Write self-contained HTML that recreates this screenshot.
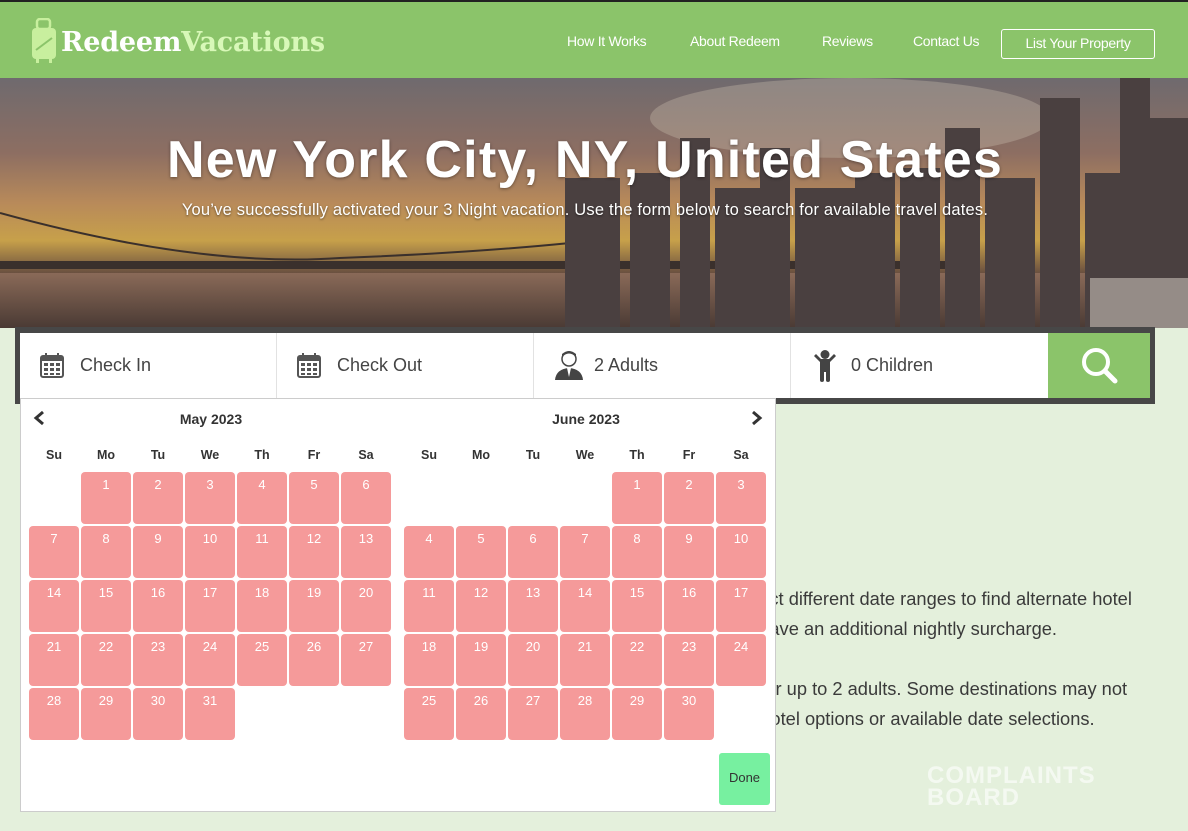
<!DOCTYPE html>
<html><head><meta charset="utf-8"><style>
*{box-sizing:border-box;margin:0;padding:0}
body{width:1188px;height:831px;overflow:hidden;background:#e4f0dc;font-family:"Liberation Sans",sans-serif;position:relative;color:#333}
.top{position:absolute;left:0;top:0;width:1188px;height:2px;background:#222}
header{position:absolute;left:0;top:2px;width:1188px;height:76px;background:#8bc46a}
.logo{position:absolute;left:61px;top:25px;font-family:"DejaVu Serif","Liberation Serif",serif;font-weight:bold;font-size:27px;color:#fff;letter-spacing:-0.2px}
.logo span{color:#d8f8b8}
nav a{position:absolute;top:31px;color:#fff;font-size:14px;text-decoration:none;letter-spacing:-0.3px}
.lp{position:absolute;left:1001px;top:27px;width:154px;height:30px;border:1.5px solid #fff;border-radius:3px;color:#fff;font-size:14px;text-align:center;line-height:27px;letter-spacing:-0.3px}
.hero{position:absolute;left:0;top:78px;width:1188px;height:250px;overflow:hidden}
h1{position:absolute;left:0;width:1170px;text-align:center;font-size:52px;color:#fff;font-weight:bold;letter-spacing:1.2px;text-shadow:0 1px 3px rgba(0,0,0,.4)}
.sub{position:absolute;left:0;width:1170px;text-align:center;font-size:16.5px;color:#fff;text-shadow:0 1px 2px rgba(0,0,0,.5);letter-spacing:0.2px}
.bar{position:absolute;left:15px;top:327px;width:1140px;height:77px;background:#474747}
.in{position:absolute;left:20px;top:333px;width:1130px;height:65px;background:#fff}
.f{position:absolute;top:0;height:65px;border-right:1px solid #e2e2e2;font-size:18px;color:#444;line-height:65px}
.f svg{position:absolute;top:19px}
.sb{position:absolute;left:1028px;top:0;width:102px;height:65px;background:#8bc46a}
.cal{position:absolute;left:20px;top:398px;width:756px;height:414px;background:#fff;border:1px solid #ccc;z-index:2}
.mt{position:absolute;top:12px;font-size:14px;color:#333;font-weight:bold;width:364px;text-align:center}
.wd{position:absolute;top:49px;font-size:12.5px;font-weight:bold;color:#333;width:50px;text-align:center}
.d{position:absolute;width:50px;height:52px;background:#f59a9a;border-radius:4px;color:#fff;font-size:13px;text-align:center;padding-top:5px}
.done{position:absolute;left:698px;top:354px;width:51px;height:52px;background:#77f0a0;border-radius:3px;font-size:13px;color:#333;text-align:center;line-height:50px}
.txt{position:absolute;left:745px;font-size:18.3px;color:#3a3a3a;z-index:1;white-space:nowrap}
.cb{position:absolute;left:927px;top:765px;color:rgba(255,255,255,.6);font-size:24px;font-weight:bold;line-height:22px;letter-spacing:1px}
</style></head><body>
<div class="top"></div>
<header>
<svg style="position:absolute;left:30px;top:16px" width="28" height="46" viewBox="0 0 28 46"><rect x="7" y="1" width="13" height="10" rx="3" fill="none" stroke="#c8ef9e" stroke-width="2.5"/><rect x="2" y="10" width="24" height="31" rx="4" fill="#c8ef9e"/><rect x="6" y="40" width="3" height="5" fill="#c8ef9e"/><rect x="19" y="40" width="3" height="5" fill="#c8ef9e"/><path d="M6 32 L22 20" stroke="#8bc46a" stroke-width="2"/></svg>
<div class="logo">Redeem<span>Vacations</span></div>
<nav><a style="left:567px">How It Works</a><a style="left:690px">About Redeem</a><a style="left:822px">Reviews</a><a style="left:913px">Contact Us</a></nav>
<div class="lp">List Your Property</div>
</header>
<div class="hero">
<svg width="1188" height="250" viewBox="0 0 1188 250" preserveAspectRatio="none">
<defs><linearGradient id="sky" x1="0" y1="0" x2="0" y2="1">
<stop offset="0" stop-color="#6f6a6e"/><stop offset=".3" stop-color="#8d6e62"/><stop offset=".5" stop-color="#b88a5a"/><stop offset=".65" stop-color="#c7a04a"/><stop offset=".78" stop-color="#6a5040"/><stop offset="1" stop-color="#3e3430"/></linearGradient>
<linearGradient id="w" x1="0" y1="0" x2="0" y2="1"><stop offset="0" stop-color="#8a6a58"/><stop offset="1" stop-color="#4a3a34"/></linearGradient></defs>
<rect width="1188" height="250" fill="url(#sky)"/>
<ellipse cx="850" cy="40" rx="200" ry="40" fill="#ccbfb0" opacity=".35"/>
<rect x="0" y="195" width="1188" height="55" fill="url(#w)"/>
<rect x="0" y="183" width="950" height="8" fill="#3a302c"/>
<path d="M0 135 Q200 190 340 180 Q470 175 570 165" stroke="#3a302c" stroke-width="2" fill="none"/>
<g fill="#4a4040">
<rect x="565" y="100" width="55" height="150"/><rect x="630" y="95" width="40" height="155"/><rect x="680" y="60" width="30" height="190"/><rect x="715" y="110" width="50" height="140"/><rect x="760" y="70" width="30" height="180"/><rect x="795" y="110" width="60" height="140"/><rect x="855" y="95" width="40" height="155"/><rect x="900" y="90" width="40" height="160"/><rect x="945" y="50" width="35" height="200"/><rect x="985" y="100" width="50" height="150"/><rect x="1040" y="20" width="40" height="230"/><rect x="1085" y="95" width="35" height="155"/><rect x="1120" y="0" width="30" height="250"/><rect x="1150" y="40" width="38" height="210"/>
</g>
<rect x="1090" y="200" width="98" height="50" fill="#c8c0b8" opacity=".6"/>
</svg>
<h1 style="top:52px">New York City, NY, United States</h1>
<div class="sub" style="top:123px">You’ve successfully activated your 3 Night vacation. Use the form below to search for available travel dates.</div>
</div>
<div class="bar"></div>
<div class="in">
<div class="f" style="left:0;width:257px;padding-left:60px"><svg style="left:20px" width="24" height="26" viewBox="0 0 24 26"><rect x="1" y="4" width="22" height="21" rx="2" fill="none" stroke="#555" stroke-width="2"/><rect x="1" y="4" width="22" height="5" fill="#555"/><rect x="5" y="1" width="2" height="6" fill="#555"/><rect x="17" y="1" width="2" height="6" fill="#555"/><g fill="#555"><rect x="4" y="11" width="4" height="3"/><rect x="10" y="11" width="4" height="3"/><rect x="16" y="11" width="4" height="3"/><rect x="4" y="16" width="4" height="3"/><rect x="10" y="16" width="4" height="3"/><rect x="16" y="16" width="4" height="3"/><rect x="4" y="21" width="4" height="2"/><rect x="10" y="21" width="4" height="2"/><rect x="16" y="21" width="4" height="2"/></g></svg>Check In</div>
<div class="f" style="left:257px;width:257px;padding-left:60px"><svg style="left:20px" width="24" height="26" viewBox="0 0 24 26"><rect x="1" y="4" width="22" height="21" rx="2" fill="none" stroke="#555" stroke-width="2"/><rect x="1" y="4" width="22" height="5" fill="#555"/><rect x="5" y="1" width="2" height="6" fill="#555"/><rect x="17" y="1" width="2" height="6" fill="#555"/><g fill="#555"><rect x="4" y="11" width="4" height="3"/><rect x="10" y="11" width="4" height="3"/><rect x="16" y="11" width="4" height="3"/><rect x="4" y="16" width="4" height="3"/><rect x="10" y="16" width="4" height="3"/><rect x="16" y="16" width="4" height="3"/><rect x="4" y="21" width="4" height="2"/><rect x="10" y="21" width="4" height="2"/><rect x="16" y="21" width="4" height="2"/></g></svg>Check Out</div>
<div class="f" style="left:514px;width:257px;padding-left:60px"><svg style="left:20px;top:17px" width="30" height="30" viewBox="0 0 30 30"><circle cx="15" cy="9" r="7" fill="#fff" stroke="#444" stroke-width="1.5"/><path d="M8 7 Q15 0 22 7 L22 4 Q15 -2 8 4Z" fill="#444"/><path d="M1 30 Q2 19 15 18 Q28 19 29 30Z" fill="#444"/><path d="M13 18 L15 27 L17 18Z" fill="#fff"/></svg>2 Adults</div>
<div class="f" style="left:771px;width:257px;padding-left:60px;border:none"><svg style="left:22px;top:17px" width="24" height="32" viewBox="0 0 24 32"><circle cx="12" cy="4.5" r="4.5" fill="#444"/><path d="M1 6 L7 12 L17 12 L23 6 L21 4 L16 9 L8 9 L3 4Z" fill="#444"/><rect x="7" y="10" width="10" height="12" fill="#444"/><rect x="7" y="20" width="4" height="12" rx="2" fill="#444"/><rect x="13" y="20" width="4" height="12" rx="2" fill="#444"/></svg>0 Children</div>
<div class="sb"><svg style="position:absolute;left:32px;top:13px" width="40" height="40" viewBox="0 0 40 40"><circle cx="16" cy="16" r="12" fill="none" stroke="#fff" stroke-width="4"/><path d="M25 25 L35 35" stroke="#fff" stroke-width="5" stroke-linecap="round"/></svg></div>
</div>
<div class="txt" style="top:588px">elect different date ranges to find alternate hotel</div>
<div class="txt" style="top:618px">y have an additional nightly surcharge.</div>
<div class="txt" style="top:678px">d for up to 2 adults. Some destinations may not</div>
<div class="txt" style="top:708px">e hotel options or available date selections.</div>
<div class="cb">COMPLAINTS<br>BOARD</div>
<div class="cal" id="cal">
<svg style="position:absolute;left:12px;top:11px" width="12" height="16" viewBox="0 0 12 16"><path d="M10 2 L3 8 L10 14" stroke="#333" stroke-width="3" fill="none"/></svg>
<svg style="position:absolute;left:730px;top:11px" width="12" height="16" viewBox="0 0 12 16"><path d="M2 2 L9 8 L2 14" stroke="#333" stroke-width="3" fill="none"/></svg>
<div class="mt" style="left:8px">May 2023</div>
<div class="mt" style="left:383px">June 2023</div>
</div>
<script>
var c=document.getElementById('cal'),w=['Su','Mo','Tu','We','Th','Fr','Sa'],h='';
function m(x0,start,n){for(var i=0;i<7;i++)h+='<div class="wd" style="left:'+(x0+i*52)+'px">'+w[i]+'</div>';
for(var d=1;d<=n;d++){var p=start+d-1,col=p%7,row=Math.floor(p/7);h+='<div class="d" style="left:'+(x0+col*52)+'px;top:'+(73+row*54)+'px">'+d+'</div>';}}
m(8,1,31);m(383,4,30);
h+='<div class="done">Done</div>';
c.insertAdjacentHTML('beforeend',h);
</script>
</body></html>
